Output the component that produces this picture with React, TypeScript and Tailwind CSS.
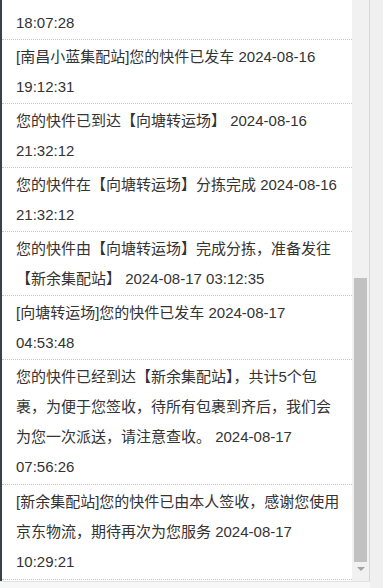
import React from "react";

const rows: string[][] = [
  ["[南昌小蓝集配站]您的快件已发车 2024-08-16", "19:12:31"],
  ["您的快件已到达【向塘转运场】 2024-08-16", "21:32:12"],
  ["您的快件在【向塘转运场】分拣完成 2024-08-16", "21:32:12"],
  ["您的快件由【向塘转运场】完成分拣，准备发往", "【新余集配站】 2024-08-17 03:12:35"],
  ["[向塘转运场]您的快件已发车 2024-08-17", "04:53:48"],
  [
    "您的快件已经到达【新余集配站】，共计5个包",
    "裹，为便于您签收，待所有包裹到齐后，我们会",
    "为您一次派送，请注意查收。 2024-08-17",
    "07:56:26",
  ],
  ["[新余集配站]您的快件已由本人签收，感谢您使用", "京东物流，期待再次为您服务 2024-08-17", "10:29:21"],
];

export default function App() {
  return (
    <div
      className="flex h-[588px] w-[383px] overflow-hidden bg-[#f0f0f0]"
      style={{ fontFamily: '"Liberation Sans", "Noto Sans CJK SC", sans-serif' }}
    >
      <div className="flex w-[370px] flex-col">
        <div className="flex h-[581px]">
          <div className="w-[2px] bg-[#3b4247]" />
          <div className="w-[350px] overflow-hidden bg-white text-[15px] leading-[30px] text-[#333]">
            <div className="border-b border-dotted border-[#c4c4c4] pl-[14px] pr-[14px] pt-[8px] pb-[1px] whitespace-nowrap">
              18:07:28
            </div>
            {rows.map((lines, i) => (
              <div
                key={i}
                className={
                  lines.length > 2
                    ? "border-b border-dotted border-[#c4c4c4] pl-[14px] pr-[14px] pt-[2px] pb-[2px]"
                    : "border-b border-dotted border-[#c4c4c4] pl-[14px] pr-[14px] pt-[2px] pb-[1px]"
                }
              >
                {lines.map((l, j) => (
                  <div key={j} className="whitespace-nowrap">
                    {l}
                  </div>
                ))}
              </div>
            ))}
          </div>
          <div className="flex w-[17px] flex-col bg-[#f1f1f1]">
            <div className="h-[278px]" />
            <div className="mx-[2px] h-[284px] bg-[#c1c1c1]" />
            <div className="flex h-[17px] items-start justify-center pt-[5px]">
              <div className="h-0 w-0 border-l-[4px] border-r-[4px] border-t-[4px] border-l-transparent border-r-transparent border-t-[#a3a3a3]" />
            </div>
          </div>
          <div className="w-px bg-[#d6d6d6]" />
        </div>
        <div className="flex-1 border-t border-[#e0e0e0] bg-[#f7f7f7]" />
      </div>
      <div className="flex-1 bg-[#f0f0f0]" />
    </div>
  );
}
